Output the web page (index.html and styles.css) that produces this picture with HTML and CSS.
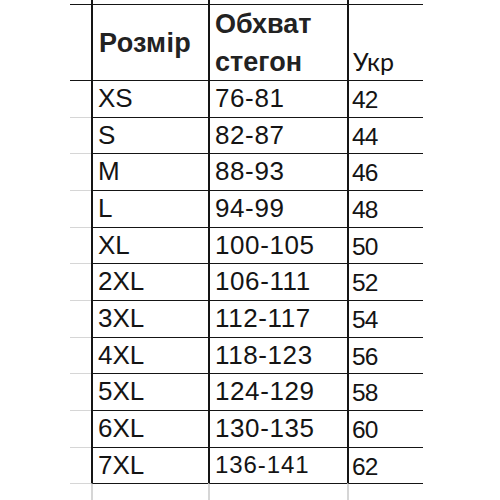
FILE: index.html
```html
<!DOCTYPE html>
<html lang="uk">
<head>
<meta charset="utf-8">
<title>Розмір</title>
<link rel="stylesheet" href="styles.css">
</head>
<body>
<div class="sheet">
  <div class="g"></div><div class="c top"></div><div class="c top"></div><div class="c top"></div>

  <div class="g dark"></div>
  <div class="c hd h1">Розмір</div>
  <div class="c hd h2">Обхват<br>стегон</div>
  <div class="c hd h3">Укр</div>

  <div class="g dark"></div><div class="c s">XS</div><div class="c n">76-81</div><div class="c u">42</div>
  <div class="g"></div><div class="c s">S</div><div class="c n">82-87</div><div class="c u">44</div>
  <div class="g"></div><div class="c s">M</div><div class="c n">88-93</div><div class="c u">46</div>
  <div class="g"></div><div class="c s">L</div><div class="c n">94-99</div><div class="c u">48</div>
  <div class="g"></div><div class="c s">XL</div><div class="c n">100-105</div><div class="c u">50</div>
  <div class="g"></div><div class="c s">2XL</div><div class="c n">106-111</div><div class="c u">52</div>
  <div class="g"></div><div class="c s">3XL</div><div class="c n">112-117</div><div class="c u">54</div>
  <div class="g"></div><div class="c s">4XL</div><div class="c n">118-123</div><div class="c u">56</div>
  <div class="g"></div><div class="c s">5XL</div><div class="c n">124-129</div><div class="c u">58</div>
  <div class="g"></div><div class="c s">6XL</div><div class="c n">130-135</div><div class="c u">60</div>
  <div class="g"></div><div class="c s">7XL</div><div class="c n small">136-141</div><div class="c u">62</div>

  <div class="g"></div><div class="c end"></div><div class="c end"></div><div class="c end"></div>
</div>
</body>
</html>
```

FILE: styles.css
```css
html, body {
  margin: 0;
  padding: 0;
  background: #ffffff;
}

.sheet {
  display: grid;
  grid-template-columns: 21px 117px 139px 76px;
  grid-template-rows: 4px 76px repeat(11, 36.67px) 1fr;
  margin-left: 70px;
  width: 353px;
  height: 500px;
  color: #141414;
  font-family: "Liberation Sans", Arial, sans-serif;
}

.g {
  border-top: 1px solid #d6d6d6;
}

.g:first-child {
  border-top: none;
}

.g.dark {
  border-top: 1px solid #151515;
}

.c {
  box-sizing: border-box;
  border-top: 1px solid #151515;
  border-left: 2px solid #151515;
  min-width: 0;
  white-space: nowrap;
}

.c.top {
  border-top: none;
}

.c.end {
  border-left: 2px solid #d6d6d6;
}

.hd {
  font-weight: bold;
  font-size: 27px;
  color: #222222;
}

.h1 {
  display: flex;
  align-items: center;
  padding-left: 6px;
  padding-top: 1px;
  letter-spacing: 0.3px;
}

.h2 {
  padding-left: 5px;
  line-height: 38.4px;
  padding-top: 0;
}

.h3 {
  display: flex;
  align-items: flex-end;
  padding-left: 4px;
  padding-bottom: 4px;
  font-family: Lato, "Liberation Sans", sans-serif;
  font-weight: normal;
  font-size: 25px;
  line-height: 30px;
  color: #141414;
}

.s, .n {
  font-size: 26px;
  line-height: 34px;
  padding-left: 5px;
}

.n {
  padding-left: 5px;
  letter-spacing: 0.6px;
}

.n.small {
  font-size: 24px;
  letter-spacing: 0.9px;
  padding-left: 5px;
}

.u {
  font-family: "Liberation Sans", Arial, sans-serif;
  font-size: 24.5px;
  letter-spacing: -0.8px;
  line-height: 34px;
  padding-left: 3px;
  padding-top: 2px;
}
```
